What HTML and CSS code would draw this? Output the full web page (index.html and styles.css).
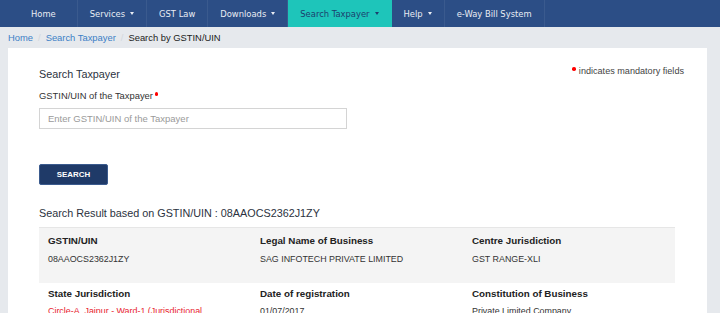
FILE: index.html
```html
<!DOCTYPE html>
<html lang="en">
<head>
  <meta charset="UTF-8">
  <meta name="viewport" content="width=device-width, initial-scale=1.0">
  <title>Search Taxpayer</title>
  <link rel="stylesheet" href="styles.css">
</head>
<body>
  <nav class="topnav">
    <ul class="menu">
      <li class="menu-item home">Home</li>
      <li class="menu-item">Services <span class="caret"></span></li>
      <li class="menu-item">GST Law</li>
      <li class="menu-item">Downloads <span class="caret"></span></li>
      <li class="menu-item active">Search Taxpayer <span class="caret"></span></li>
      <li class="menu-item">Help <span class="caret"></span></li>
      <li class="menu-item">e-Way Bill System</li>
    </ul>
  </nav>

  <ol class="crumbs">
    <li><a href="#">Home</a></li>
    <li><a href="#">Search Taxpayer</a></li>
    <li class="current">Search by GSTIN/UIN</li>
  </ol>

  <main class="page">
    <section class="panel">
      <div class="panel-head">
        <h4 class="title">Search Taxpayer</h4>
        <p class="mandatory"><span class="req"></span>indicates mandatory fields</p>
      </div>

      <label class="field-label" for="gstin">GSTIN/UIN of the Taxpayer<span class="req"></span></label>
      <input class="field" id="gstin" type="text" placeholder="Enter GSTIN/UIN of the Taxpayer">

      <button class="btn-search">SEARCH</button>

      <h4 class="result-title">Search Result based on GSTIN/UIN : 08AAOCS2362J1ZY</h4>

      <div class="result">
        <div class="result-row shaded">
          <div class="cell">
            <strong>GSTIN/UIN</strong>
            <span>08AAOCS2362J1ZY</span>
          </div>
          <div class="cell">
            <strong>Legal Name of Business</strong>
            <span>SAG INFOTECH PRIVATE LIMITED</span>
          </div>
          <div class="cell">
            <strong>Centre Jurisdiction</strong>
            <span>GST RANGE-XLI</span>
          </div>
        </div>
        <div class="result-row">
          <div class="cell">
            <strong>State Jurisdiction</strong>
            <span class="alert">Circle-A, Jaipur - Ward-1 (Jurisdictional</span>
          </div>
          <div class="cell">
            <strong>Date of registration</strong>
            <span>01/07/2017</span>
          </div>
          <div class="cell">
            <strong>Constitution of Business</strong>
            <span>Private Limited Company</span>
          </div>
        </div>
      </div>
    </section>
  </main>
</body>
</html>
```

FILE: styles.css
```css
* {
  margin: 0;
  padding: 0;
  box-sizing: border-box;
}

:root {
  --nav-bg: #2c4e86;
  --nav-text: #e9edf4;
  --teal: #1ec5ba;
  --page-bg: #e6e9ed;
  --link: #3c7fc6;
  --text: #333;
  --navy: #1f3a68;
  --red: #e8232f;
}

body {
  background-color: var(--page-bg);
  color: var(--text);
  font-family: "Liberation Sans", Arial, sans-serif;
  height: 313px;
  overflow: hidden;
}

.topnav {
  background-color: var(--nav-bg);
  height: 27px;
}

.menu {
  list-style: none;
  display: flex;
  height: 100%;
  padding-left: 10px;
}

.menu-item {
  display: flex;
  align-items: center;
  gap: 5px;
  padding: 0 12px;
  color: var(--nav-text);
  font-family: "DejaVu Sans", Verdana, sans-serif;
  font-size: 8.4px;
  border-right: 1px solid rgba(255, 255, 255, 0.07);
}

.menu-item.home {
  padding: 0 21px;
}

.menu-item.active {
  background-color: var(--teal);
  color: #1c3d6d;
  border-right-color: var(--teal);
}

.caret {
  width: 0;
  height: 0;
  border-left: 2.5px solid transparent;
  border-right: 2.5px solid transparent;
  border-top: 3px solid currentColor;
}

.crumbs {
  list-style: none;
  display: flex;
  align-items: center;
  height: 21px;
  padding-left: 8px;
  font-size: 9.4px;
}

.crumbs li + li:before {
  content: "/";
  color: #d3d7dc;
  padding: 0 5px;
}

.crumbs a {
  color: var(--link);
  text-decoration: none;
}

.crumbs .current {
  color: #222;
}

.page {
  padding: 0 13px 0 8px;
}

.panel {
  background-color: #fff;
  padding: 17px 32px 20px 31px;
  display: flex;
  flex-direction: column;
  align-items: flex-start;
}

.panel > * {
  flex-shrink: 0;
}

.panel-head {
  display: flex;
  justify-content: space-between;
  align-items: flex-start;
  width: 100%;
}

.title {
  font-weight: normal;
  font-size: 10.8px;
  line-height: 14px;
  color: #2b3240;
  margin-top: 2px;
}

.mandatory {
  font-size: 9.1px;
  line-height: 12px;
  color: #444;
  margin-right: -9px;
  display: flex;
  align-items: flex-start;
}

.req {
  display: inline-block;
  width: 3.5px;
  height: 3.5px;
  border-radius: 50%;
  background-color: red;
  margin: 2px 3px 0 2px;
}

.mandatory .req {
  margin: 2px 3px 0 0;
}

.field-label {
  font-size: 9.4px;
  line-height: 12px;
  color: #333;
  margin-top: 9px;
  display: flex;
  align-items: flex-start;
}

.field {
  margin-top: 6px;
  width: 308px;
  height: 21px;
  border: 1px solid #d4d4d4;
  padding: 0 8px;
  font-family: "Liberation Sans", Arial, sans-serif;
  font-size: 9.5px;
  color: #333;
  outline: none;
}

.field::placeholder {
  color: #9a9a9a;
}

.btn-search {
  margin-top: 35px;
  width: 69px;
  height: 21px;
  background-color: var(--navy);
  border: 1px solid #3b5b8e;
  border-radius: 2px;
  color: #fff;
  font-family: "Liberation Sans", Arial, sans-serif;
  font-weight: bold;
  font-size: 7.9px;
}

.result-title {
  font-weight: normal;
  font-size: 10.8px;
  line-height: 14px;
  color: #2b3240;
  margin-top: 21px;
}

.result {
  margin-top: 7px;
  width: 100%;
}

.result-row {
  display: grid;
  grid-template-columns: repeat(3, 1fr);
  padding: 5px 0 17px;
}

.result-row.shaded {
  background-color: #f4f4f4;
  border-top: 1px solid #e6e6e6;
  padding: 7px 0 18px;
}

.cell {
  display: flex;
  flex-direction: column;
  gap: 5px;
  padding: 0 9px;
}

.cell strong {
  font-size: 9.8px;
  line-height: 12px;
  color: #222;
}

.cell span {
  font-size: 8.9px;
  line-height: 12px;
  color: #333;
  white-space: nowrap;
}

.result-row.shaded .cell {
  gap: 6px;
}

.cell span.alert {
  color: var(--red);
}
```
